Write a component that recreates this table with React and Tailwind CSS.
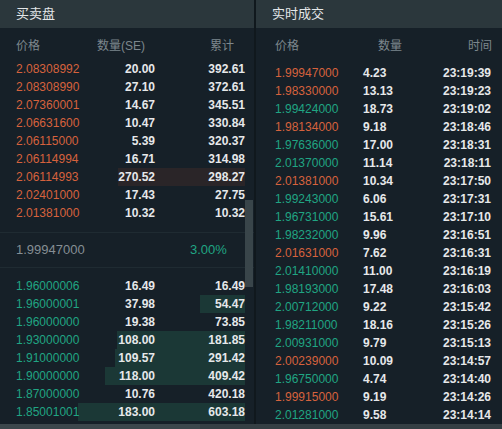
import React from "react";

const ASKS = [
  ["2.08308992", "20.00", "392.61", 0],
  ["2.08308990", "27.10", "372.61", 0],
  ["2.07360001", "14.67", "345.51", 0],
  ["2.06631600", "10.47", "330.84", 0],
  ["2.06115000", "5.39", "320.37", 0],
  ["2.06114994", "16.71", "314.98", 0],
  ["2.06114993", "270.52", "298.27", 127],
  ["2.02401000", "17.43", "27.75", 0],
  ["2.01381000", "10.32", "10.32", 0],
];

const BIDS = [
  ["1.96000006", "16.49", "16.49", 0],
  ["1.96000001", "37.98", "54.47", 45],
  ["1.96000000", "19.38", "73.85", 0],
  ["1.93000000", "108.00", "181.85", 128],
  ["1.91000000", "109.57", "291.42", 130],
  ["1.90000000", "118.00", "409.42", 140],
  ["1.87000000", "10.76", "420.18", 0],
  ["1.85001001", "183.00", "603.18", 167],
];

// side: s = sell (red), b = buy (green)
const TRADES = [
  ["1.99947000", "4.23", "23:19:39", "s"],
  ["1.98330000", "13.13", "23:19:23", "s"],
  ["1.99424000", "18.73", "23:19:02", "b"],
  ["1.98134000", "9.18", "23:18:46", "s"],
  ["1.97636000", "17.00", "23:18:31", "b"],
  ["2.01370000", "11.14", "23:18:11", "b"],
  ["2.01381000", "10.34", "23:17:50", "s"],
  ["1.99243000", "6.06", "23:17:31", "b"],
  ["1.96731000", "15.61", "23:17:10", "b"],
  ["1.98232000", "9.96", "23:16:51", "b"],
  ["2.01631000", "7.62", "23:16:31", "s"],
  ["2.01410000", "11.00", "23:16:19", "b"],
  ["1.98193000", "17.48", "23:16:03", "b"],
  ["2.00712000", "9.22", "23:15:42", "b"],
  ["1.98211000", "18.16", "23:15:26", "b"],
  ["2.00931000", "9.79", "23:15:13", "b"],
  ["2.00239000", "10.09", "23:14:57", "s"],
  ["1.96750000", "4.74", "23:14:40", "b"],
  ["1.99915000", "9.19", "23:14:26", "s"],
  ["2.01281000", "9.58", "23:14:14", "b"],
];

const FONT = {
  fontFamily: '"Liberation Sans", Arial, "Noto Sans CJK SC", sans-serif',
};

function PanelTitle({ children, className = "" }) {
  return (
    <div
      className={`h-[28px] bg-[#2b373c] flex items-center text-[13px] text-[#e3e6e8] ${className}`}
    >
      {children}
    </div>
  );
}

function DepthRow({ row, side }) {
  const [price, qty, total, bar] = row;
  return (
    <div className="relative h-[18px] w-[245px] flex items-center text-[12px]">
      {bar > 0 && (
        <div
          className={`absolute right-0 top-0 h-full ${
            side === "ask" ? "bg-[#2a2528]" : "bg-[#1b3836]"
          }`}
          style={{ width: bar }}
        />
      )}
      <span
        className={`relative w-[95px] pl-[16px] ${
          side === "ask" ? "text-[#d6623d]" : "text-[#20a583]"
        }`}
      >
        {price}
      </span>
      <span className="relative w-[60px] text-right font-bold text-[#e6e8ea]">
        {qty}
      </span>
      <span className="relative w-[90px] text-right font-bold text-[#e6e8ea]">
        {total}
      </span>
    </div>
  );
}

export default function App() {
  return (
    <div
      className="w-[502px] h-[429px] flex flex-col bg-[#162028] overflow-hidden"
      style={FONT}
    >
      <div className="flex flex-1 min-h-0">
        {/* order book */}
        <div className="w-[254px] flex flex-col">
          <PanelTitle className="pl-[16px]">买卖盘</PanelTitle>
          <div className="h-[36px] flex items-center text-[12px] text-[#7d878d]">
            <span className="w-[97px] pl-[16px]">价格</span>
            <span className="flex-1">数量(SE)</span>
            <span className="pr-[20px]">累计</span>
          </div>
          <div className="relative flex-1 min-h-0 overflow-hidden">
            <div className="mt-[-4px]">
              <div className="pb-[10px]">
                {ASKS.map((r) => (
                  <DepthRow key={r[0]} row={r} side="ask" />
                ))}
              </div>
              <div className="h-[36px] border-y border-[#1f2b32] flex items-center text-[13px]">
                <span className="w-[190px] pl-[16px] text-[#858e94]">
                  1.99947000
                </span>
                <span className="text-[#20a583]">3.00%</span>
              </div>
              <div className="pt-[9px]">
                {BIDS.map((r) => (
                  <DepthRow key={r[0]} row={r} side="bid" />
                ))}
              </div>
            </div>
            <div className="absolute right-[1px] top-[136px] w-[8px] h-[87px] bg-[#39454a]" />
          </div>
        </div>

        <div className="w-[2px] bg-[#10181d]" />

        {/* trades */}
        <div className="flex-1 flex flex-col">
          <PanelTitle className="pl-[16px]">实时成交</PanelTitle>
          <div className="h-[36px] flex items-center text-[12px] text-[#7d878d]">
            <span className="w-[122px] pl-[19px]">价格</span>
            <span className="flex-1">数量</span>
            <span className="pr-[10px]">时间</span>
          </div>
          <div className="flex-1 min-h-0 overflow-hidden">
            {TRADES.map(([price, qty, time, side]) => (
              <div
                key={time}
                className="h-[18px] flex items-center text-[12px]"
              >
                <span
                  className={`w-[107px] pl-[19px] ${
                    side === "s" ? "text-[#d6623d]" : "text-[#20a583]"
                  }`}
                >
                  {price}
                </span>
                <span className="flex-1 font-bold text-[#e6e8ea]">{qty}</span>
                <span className="pr-[11px] font-bold text-[#e6e8ea]">
                  {time}
                </span>
              </div>
            ))}
          </div>
        </div>
      </div>
      <div className="h-[5px] flex">
        <div className="w-[200px] bg-[#3c474c]" />
        <div className="flex-1 bg-[#353f44]" />
      </div>
    </div>
  );
}
